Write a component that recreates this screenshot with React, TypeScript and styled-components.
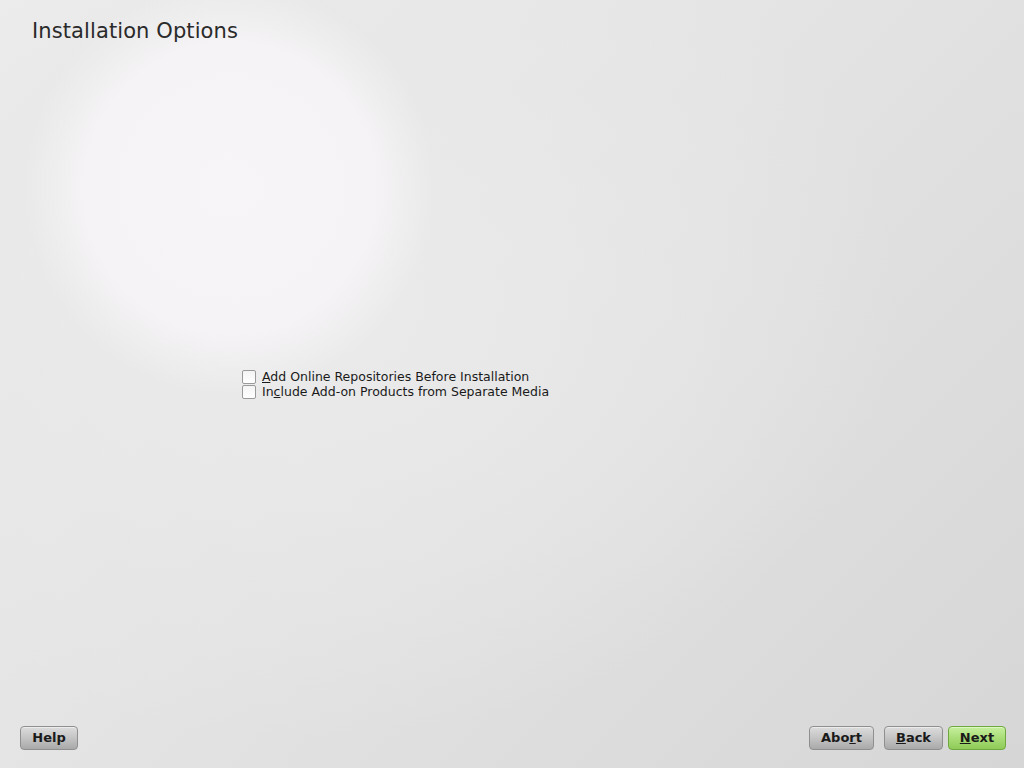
import React from "react";
import styled, { createGlobalStyle } from "styled-components";

const Global = createGlobalStyle`
  html, body { margin: 0; padding: 0; }
  body {
    width: 1024px;
    height: 768px;
    overflow: hidden;
    font-family: "DejaVu Sans", "Liberation Sans", sans-serif;
  }
`;

const Screen = styled.div`
  width: 1024px;
  height: 768px;
  display: flex;
  flex-direction: column;
  box-sizing: border-box;
  background:
    radial-gradient(circle at 230px 188px, #f7f5f7 0px, #f5f3f5 145px, rgba(240,238,240,0) 205px),
    radial-gradient(ellipse 600px 440px at 300px 300px, rgba(236,235,236,1) 0%, rgba(232,232,232,0.6) 60%, rgba(225,225,225,0) 100%),
    linear-gradient(135deg, #ededed 0%, #e4e4e4 45%, #d6d6d6 100%);
`;

const Title = styled.h1`
  margin: 0;
  padding: 18px 0 0 32px;
  height: 46px;
  box-sizing: border-box;
  font-size: 21px;
  line-height: 26px;
  font-weight: normal;
  color: #2a2a2a;
  letter-spacing: 0.1px;
`;

const Body = styled.div`
  flex: 1;
  display: flex;
  flex-direction: column;
  padding: 323px 0 0 242px;
`;

const Option = styled.label`
  display: flex;
  align-items: center;
  height: 15px;
  font-size: 12.5px;
  color: #1a1a1a;
  gap: 6px;
`;

const Box = styled.span`
  width: 12px;
  height: 12px;
  border: 1px solid #9a9a9a;
  border-radius: 2px;
  background: linear-gradient(#f4f4f4, #ffffff);
  flex: none;
`;

const U = styled.span`
  text-decoration: underline;
`;

const Footer = styled.div`
  display: flex;
  align-items: center;
  padding: 0 18px 18px 20px;
  height: 42px;
  box-sizing: border-box;
`;

const Spacer = styled.div`
  flex: 1;
`;

const Button = styled.button<{ $primary?: boolean; $w: number; $ml?: number }>`
  width: ${(p) => p.$w}px;
  height: 24px;
  margin-left: ${(p) => p.$ml ?? 0}px;
  box-sizing: border-box;
  border-radius: 4px;
  border: 1px solid ${(p) => (p.$primary ? "#6ea83e" : "#8f8f8f")};
  background: ${(p) =>
    p.$primary
      ? "linear-gradient(#c6ef9d 0%, #a9dd77 50%, #8fcb58 100%)"
      : "linear-gradient(#dcdcdc 0%, #c4c4c4 50%, #a9a9a9 100%)"};
  box-shadow: inset 0 1px 0 ${(p) => (p.$primary ? "#dcf7c2" : "#ececec")};
  font-family: "DejaVu Sans", "Liberation Sans", sans-serif;
  font-weight: bold;
  font-size: 13px;
  color: #1a1a1a;
  padding: 0 0 2px 0;
  display: flex;
  align-items: center;
  justify-content: center;
`;

export default function App() {
  return (
    <>
      <Global />
      <Screen>
        <Title>Installation Options</Title>
        <Body>
          <Option>
            <Box />
            <span>
              <U>A</U>dd Online Repositories Before Installation
            </span>
          </Option>
          <Option>
            <Box />
            <span>
              In<U>c</U>lude Add-on Products from Separate Media
            </span>
          </Option>
        </Body>
        <Footer>
          <Button $w={58}>Help</Button>
          <Spacer />
          <Button $w={65}>
            Abo<U>r</U>t
          </Button>
          <Button $w={59} $ml={10}>
            <U>B</U>ack
          </Button>
          <Button $w={58} $ml={5} $primary>
            <U>N</U>ext
          </Button>
        </Footer>
      </Screen>
    </>
  );
}
